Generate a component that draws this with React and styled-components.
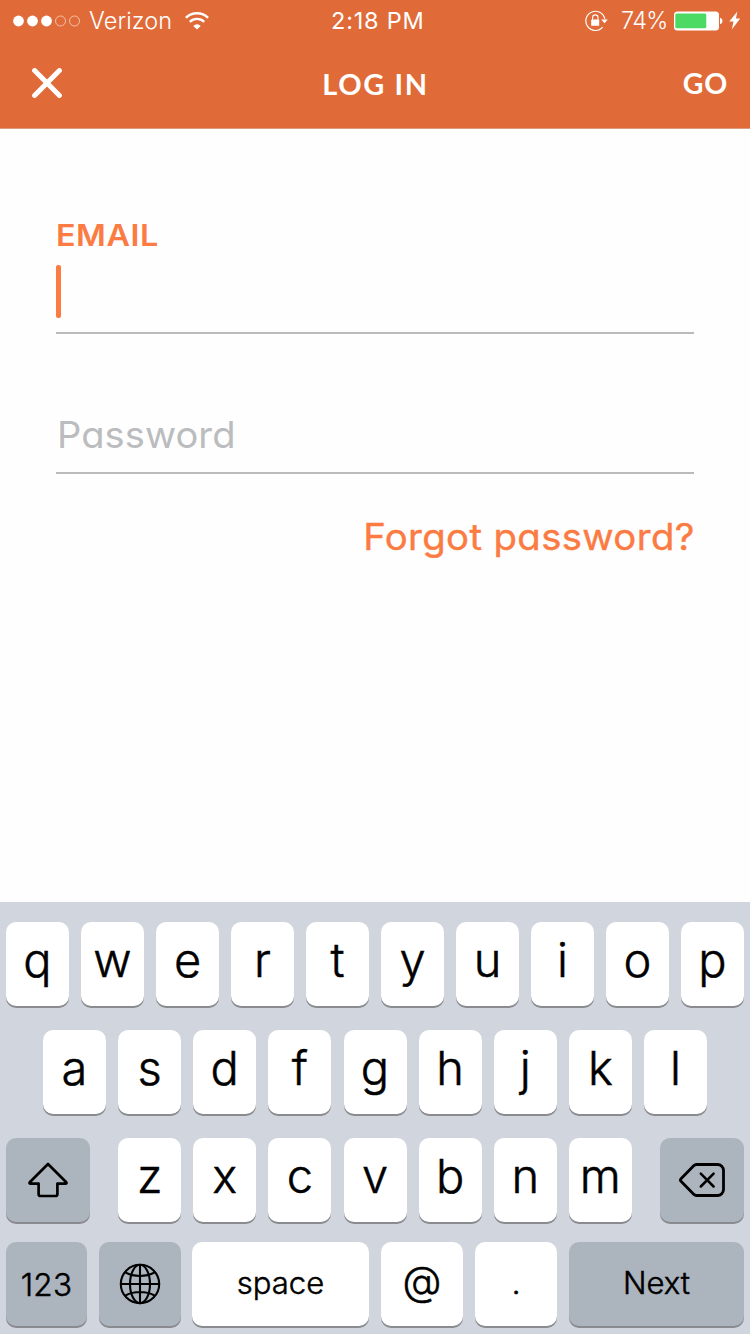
import React from "react";
import styled, { createGlobalStyle } from "styled-components";

const GlobalStyle = createGlobalStyle`
  * { box-sizing: border-box; }
  body { margin: 0; background: #fefefe; }
  button { font: inherit; border: 0; padding: 0; margin: 0; background: none; }
  svg { display: block; flex: none; }
`;

const system = `"Inter", "Liberation Sans", sans-serif`;
const brand = `"Lato", "Liberation Sans", sans-serif`;

const Screen = styled.div`
  width: 750px;
  height: 1334px;
  display: flex;
  flex-direction: column;
  overflow: hidden;
  background: #fefefe;
  font-family: ${system};
`;

const Header = styled.header`
  height: 129px;
  background: #e06b38;
  color: #fff;
  border-bottom: 1px solid #d99c80;
`;

const StatusBar = styled.div`
  height: 40px;
  display: grid;
  grid-template-columns: 331px 1fr auto;
  align-items: center;
  padding: 0 9px 0 0;
  line-height: 40px;
  font-size: 23.5px;
`;

const StatusGroup = styled.div`
  display: flex;
  align-items: center;
  height: 40px;
  padding-left: ${(p) => p.$inset || 0}px;
`;

const StatusText = styled.span`
  font-weight: ${(p) => p.$weight || 300};
  letter-spacing: ${(p) => p.$spacing || 0}px;
  margin-left: ${(p) => p.$left || 0}px;
  width: ${(p) => (p.$width ? `${p.$width}px` : "auto")};
  padding-top: 1px;
  white-space: nowrap;
`;

const NavBar = styled.div`
  height: 88px;
  display: grid;
  grid-template-columns: 1fr auto 1fr;
  align-items: center;
  padding: 0 22px 0 22px;
`;

const CloseButton = styled.button`
  && { margin: -2px 0 0 10px; }
  width: 30px;
  height: 30px;
`;

const NavTitle = styled.h1`
  margin: 0 0 0 1px;
  font: 700 29px/40px ${brand};
  letter-spacing: 1.6px;
`;

const NavAction = styled.button`
  justify-self: end;
  color: #fff;
  && {
    margin-top: -2px;
    font: 700 28.5px/40px ${brand};
  }
  letter-spacing: 0.8px;
`;

const Form = styled.main`
  flex: 1;
  padding: 85px 56px 0;
  display: flex;
  flex-direction: column;
`;

const Field = styled.div`
  height: ${(p) => p.$height}px;
  display: flex;
  flex-direction: column;
  justify-content: flex-end;
  border-bottom: 2px solid #bbbbbd;
`;

const FieldLabel = styled.label`
  font: 600 30.5px/40px ${system};
  letter-spacing: 0.5px;
  color: #fb7b43;
  transform: scaleX(1.06);
  transform-origin: left;
`;

const Caret = styled.span`
  width: 5px;
  height: 53px;
  margin: 10px 0 14px 0;
  border-radius: 2px;
  background: #fb7b43;
`;

const Placeholder = styled.span`
  font-size: 37px;
  line-height: 50px;
  font-feature-settings: "cv11";
  letter-spacing: 0.05px;
  color: #bbbcbe;
  margin: 0 0 12px 1px;
  transform: scaleX(1.03);
  transform-origin: left;
`;

const ForgotLink = styled.a`
  align-self: flex-end;
  margin: 38px -1px 0 0;
  font-size: 36.5px;
  line-height: 50px;
  letter-spacing: 0.35px;
  font-feature-settings: "cv11";
  color: #fb7b43;
  -webkit-text-stroke: 0.4px currentColor;
  white-space: nowrap;
  transform: scaleX(1.05);
  transform-origin: right;
`;

const Keyboard = styled.section`
  height: 432px;
  padding-top: 20px;
  background: #d1d5dd;
`;

const KeyRow = styled.div`
  display: flex;
  justify-content: ${(p) => (p.$spread ? "space-between" : "center")};
  padding: 0 6px;
  gap: 12px;
  margin-bottom: ${(p) => p.$below ?? 24}px;
`;

const Letters = styled.div`
  display: flex;
  gap: 12.14px;
`;

const Key = styled.button`
  && {
    width: ${(p) => p.$width || 63}px;
    height: 84px;
    flex: none;
    display: flex;
    align-items: center;
    justify-content: center;
    margin-left: ${(p) => p.$pull || 0}px;
    padding-top: ${(p) => p.$drop || 0}px;
    padding-bottom: ${(p) => p.$lift ?? 8}px;
    border-radius: 10px;
    color: #000;
    background: ${(p) => (p.$dark ? "#acb4be" : "#fff")};
    box-shadow: 0 2px 0 #898b8f;
    font: 300 ${(p) => p.$size || 47}px/1.2 ${system};
    letter-spacing: ${(p) => p.$spacing || 0}px;
    -webkit-text-stroke: 0.5px #000;
  }
`;

const SignalIcon = () => (
  <svg width="68" height="12" viewBox="0 0 68 12">
    {[0, 1, 2].map((n) => <circle key={n} cx={5.5 + n * 14} cy="6" r="5.4" fill="#fff" />)}
    {[3, 4].map((n) => <circle key={n} cx={5.5 + n * 14} cy="6" r="5" fill="none" stroke="#fff" strokeOpacity=".7" strokeWidth=".8" />)}
  </svg>
);

const WifiIcon = () => (
  <svg width="24" height="18" viewBox="0 0 24 18" fill="none" stroke="#fff" strokeWidth="2.4">
    <path d="M.9 5.8a15.8 15.8 0 0 1 22.2 0" />
    <path d="M4.8 9.8a10.3 10.3 0 0 1 14.4 0" />
    <path d="M12 17.6 8.3 13.9a5.2 5.2 0 0 1 7.4 0Z" fill="#fff" stroke="none" />
  </svg>
);

const RotationLockIcon = () => (
  <svg width="23" height="22" viewBox="0 0 23 22" fill="none" stroke="#fff">
    <path d="M19.8 8.8A9.6 9.6 0 1 0 17.7 17.2" strokeWidth="1.2" />
    <path d="M16.2 9.6h6.6l-3.3 3.6Z" fill="#fff" stroke="none" />
    <path d="M7.6 10V7.6a2.7 2.7 0 0 1 5.4 0V10" strokeWidth="1.1" />
    <rect x="6.2" y="9.6" width="8" height="6.2" rx=".6" fill="#fff" stroke="none" />
  </svg>
);

const BatteryIcon = () => (
  <svg width="50" height="20" viewBox="0 0 50 20">
    <rect x="0" y=".5" width="45" height="19" rx="3.5" fill="#fff" />
    <rect x="1.3" y="2.6" width="31" height="14.6" rx="1.5" fill="#4cd964" />
    <path d="M46 6.8c3.3.5 3.3 6 0 6.5Z" fill="#fff" />
  </svg>
);

const BoltIcon = () => (
  <svg width="12" height="19" viewBox="0 0 12 19">
    <path d="M8.4.4.2 10.6h4.3L2.8 18.4 11.2 7.4H6.9Z" fill="#fff" />
  </svg>
);

const CloseIcon = () => (
  <svg width="30" height="30" viewBox="0 0 30 30" stroke="#fff" strokeWidth="5" strokeLinecap="round">
    <path d="M2.6 2.6 27.4 27.4M27.4 2.6 2.6 27.4" />
  </svg>
);

const ShiftIcon = () => (
  <svg width="40" height="36" viewBox="0 0 40 36" fill="none" stroke="#000" strokeWidth="2.7" strokeLinejoin="round">
    <path d="M20 2 2 20c-.9.9-.5 1.7.6 1.7h8V32c0 1.4.7 2 2 2h14.8c1.3 0 2-.6 2-2V21.7h8c1.1 0 1.5-.8.6-1.7Z" />
  </svg>
);

const BackspaceIcon = () => (
  <svg width="46" height="34" viewBox="0 0 46 34" fill="none" stroke="#000" strokeWidth="2.8" strokeLinejoin="round" strokeLinecap="round">
    <path d="M17.5 1.5H38.5a6 6 0 0 1 6 6v19a6 6 0 0 1-6 6H17.5a4 4 0 0 1-2.8-1.2L2 18.3a1.7 1.7 0 0 1 0-2.6L14.7 2.7a4 4 0 0 1 2.8-1.2Z" />
    <path d="m21.8 10.7 12.8 12.8M34.6 10.7 21.8 23.5" strokeWidth="2.5" />
  </svg>
);

const GlobeIcon = () => (
  <svg width="42" height="42" viewBox="0 0 42 42" fill="none" stroke="#000" strokeWidth="2.1">
    <circle cx="21" cy="21" r="19.2" />
    <ellipse cx="21" cy="21" rx="10" ry="19.2" />
    <path d="M21 1.8v38.4M1.8 21h38.4M6.5 9.5c8.5 4.6 20.5 4.6 29 0M6.5 32.5c8.5-4.6 20.5-4.6 29 0" />
  </svg>
);

const letterKeys = (row) => row.split("").map((c) => <Key key={c}>{c}</Key>);

export default function App() {
  return (
    <Screen>
      <GlobalStyle />
      <Header>
        <StatusBar>
          <StatusGroup $inset={13}>
            <SignalIcon />
            <StatusText $left={8} $spacing={0.1} $width={96}>Verizon</StatusText>
            <WifiIcon />
          </StatusGroup>
          <StatusText $weight={400} $spacing={0.8}>2:18 PM</StatusText>
          <StatusGroup>
            <RotationLockIcon />
            <StatusText $left={13} $width={53} $spacing={-0.6}>74%</StatusText>
            <BatteryIcon />
            <StatusGroup $inset={5}><BoltIcon /></StatusGroup>
          </StatusGroup>
        </StatusBar>
        <NavBar>
          <CloseButton aria-label="Close"><CloseIcon /></CloseButton>
          <NavTitle>LOG IN</NavTitle>
          <NavAction>GO</NavAction>
        </NavBar>
      </Header>
      <Form>
        <Field $height={120}>
          <FieldLabel>EMAIL</FieldLabel>
          <Caret />
        </Field>
        <Field $height={140}>
          <Placeholder>Password</Placeholder>
        </Field>
        <ForgotLink>Forgot password?</ForgotLink>
      </Form>
      <Keyboard>
        <KeyRow>{letterKeys("qwertyuiop")}</KeyRow>
        <KeyRow><Letters>{letterKeys("asdfghjkl")}</Letters></KeyRow>
        <KeyRow $spread $below={20}>
          <Key $dark $width={84} $lift={0} aria-label="Shift"><ShiftIcon /></Key>
          <Letters>{letterKeys("zxcvbnm")}</Letters>
          <Key $dark $width={84} $lift={0} aria-label="Delete"><BackspaceIcon /></Key>
        </KeyRow>
        <KeyRow>
          <Key $dark $width={81} $size={31.5} $spacing={0.3} $drop={2} $lift={0}>123</Key>
          <Key $dark $width={82} $lift={0} aria-label="Switch keyboard"><GlobeIcon /></Key>
          <Key $width={177} $pull={-1} $size={31} $lift={2}>space</Key>
          <Key $width={82} $size={40} $lift={6}>@</Key>
          <Key $width={82} $size={31} $lift={2}>.</Key>
          <Key $dark $width={175} $size={31} $lift={2}>Next</Key>
        </KeyRow>
      </Keyboard>
    </Screen>
  );
}
